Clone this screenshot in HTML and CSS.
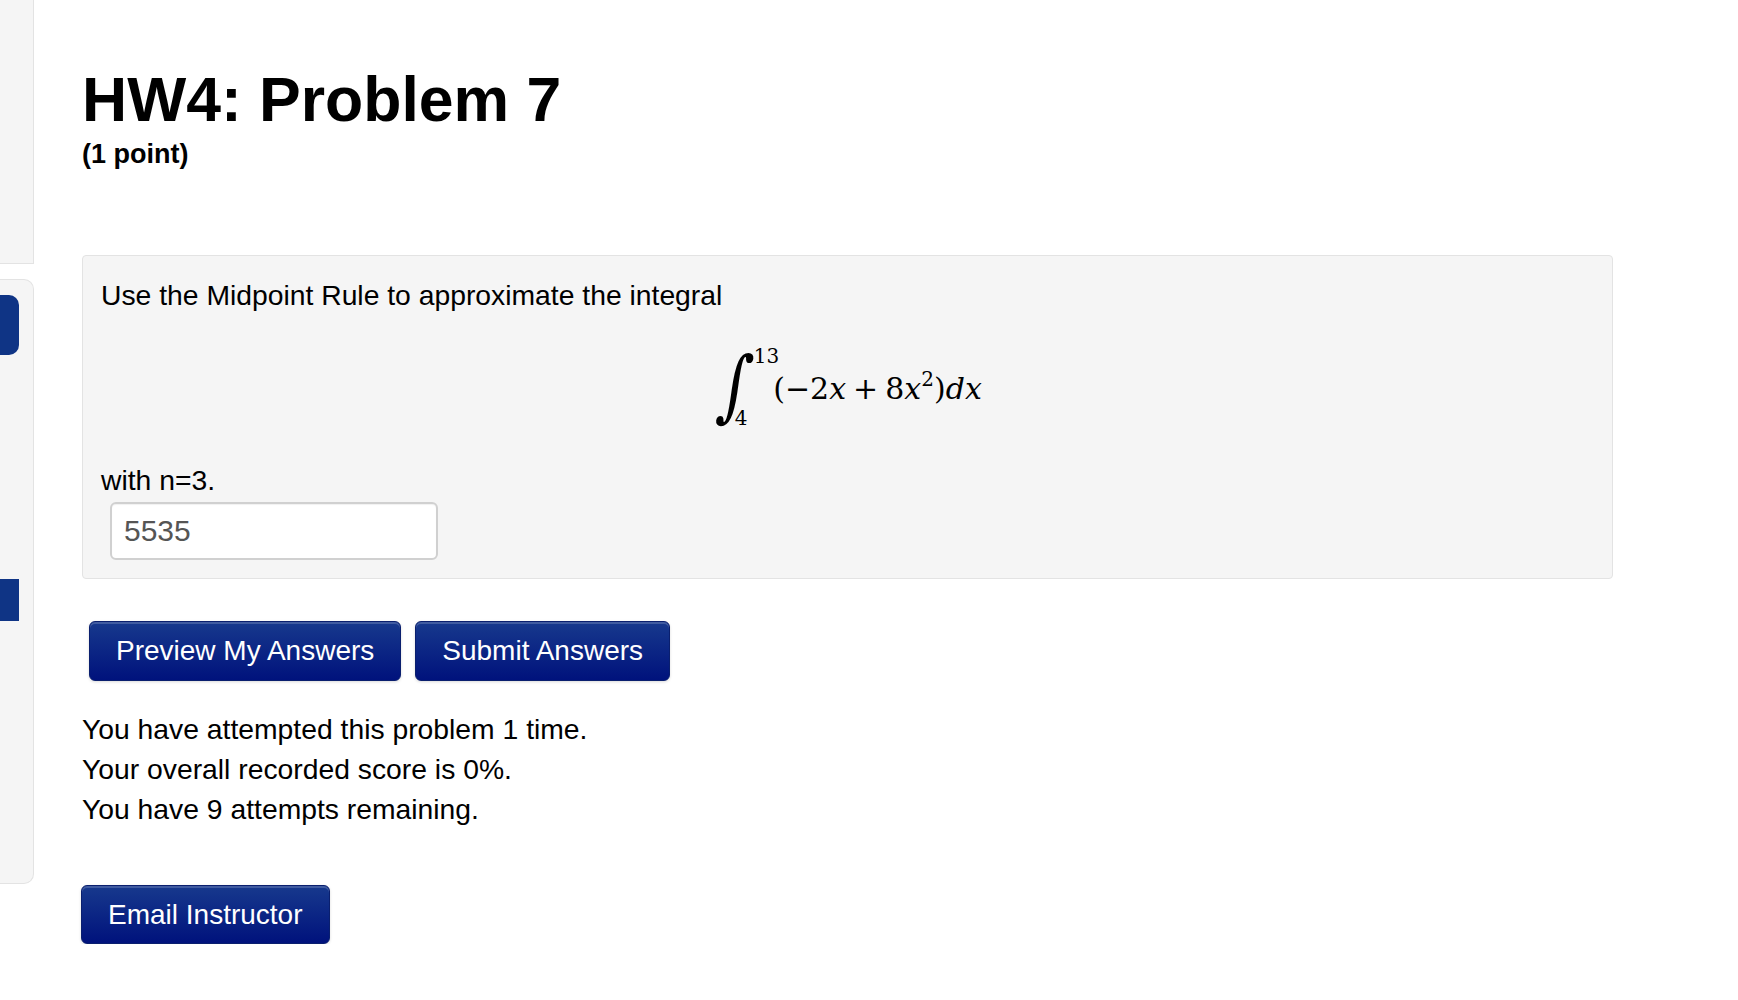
FILE: index.html
```html
<!DOCTYPE html>
<html lang="en">
<head>
<meta charset="utf-8">
<title>HW4: Problem 7</title>
<link rel="stylesheet" href="styles.css">
</head>
<body>
<div class="page">
  <aside class="sidebar">
    <div class="side-top"></div>
    <div class="side-panel">
      <div class="tab"></div>
      <div class="tab2"></div>
    </div>
  </aside>
  <main class="main">
    <h1 class="title">HW4: Problem 7</h1>
    <div class="points">(1 point)</div>
    <div class="problem">
      <p class="line">Use the Midpoint Rule to approximate the integral</p>
      <div class="math">
        <span class="int">∫</span>
        <span class="limits"><span class="up">13</span><span class="lo">4</span></span>
        <span class="expr">(−2<i>x</i><span class="op">+</span>8<i>x</i><sup class="sup">2</sup>)<i>dx</i></span>
      </div>
      <p class="line">with n=3.</p>
      <input class="answer" type="text" value="5535">
    </div>
    <div class="actions">
      <div class="btn">Preview My Answers</div>
      <div class="btn">Submit Answers</div>
    </div>
    <div class="status">
      <div>You have attempted this problem 1 time.</div>
      <div>Your overall recorded score is 0%.</div>
      <div>You have 9 attempts remaining.</div>
    </div>
    <div class="btn email">Email Instructor</div>
  </main>
</div>
</body>
</html>
```

FILE: styles.css
```css
* { box-sizing: border-box; }
body {
  margin: 0;
  background: #fff;
  color: #000;
  font-family: "Liberation Sans", Arial, Helvetica, sans-serif;
}
.page {
  display: flex;
  align-items: flex-start;
}
.sidebar {
  width: 34px;
  flex: none;
  display: flex;
  flex-direction: column;
  gap: 15px;
}
.side-top {
  height: 264px;
  background: #f5f5f5;
  border-right: 1px solid #e3e3e3;
  border-bottom: 1px solid #e3e3e3;
}
.side-panel {
  height: 605px;
  background: #f5f5f5;
  border: 1px solid #e3e3e3;
  border-left: none;
  border-radius: 0 10px 10px 0;
  padding-top: 15px;
  display: flex;
  flex-direction: column;
}
.tab {
  width: 19px;
  height: 60px;
  background: #0f3485;
  border-radius: 0 10px 10px 0;
}
.tab2 {
  margin-top: 224px;
  width: 19px;
  height: 42px;
  background: #0f3485;
}
.main {
  flex: none;
  padding: 64px 0 0 48px;
}
.title {
  margin: 0;
  font-size: 62.5px;
  line-height: 70px;
  font-weight: bold;
}
.points {
  margin-top: 5px;
  font-size: 27px;
  line-height: 30px;
  font-weight: bold;
}
.problem {
  margin-top: 86px;
  width: 1531px;
  background: #f5f5f5;
  border: 1px solid #e3e3e3;
  border-radius: 4px;
  padding: 21px 18px 18px 18px;
  font-size: 28.3px;
  line-height: 36px;
}
.line {
  margin: 0;
}
.math {
  height: 149px;
  display: flex;
  justify-content: center;
  align-items: center;
  font-family: "DejaVu Serif", "Liberation Serif", serif;
  color: #000;
}
.int {
  font-size: 78px;
  line-height: 90px;
  transform: skewX(-7deg) scaleX(0.8);
  margin-left: 2px;
  margin-top: -6px;
}
.limits {
  display: flex;
  flex-direction: column;
  justify-content: space-between;
  height: 82px;
  font-size: 20px;
  line-height: 20px;
  margin-left: -6px;
  margin-top: -2px;
}
.up {
  margin-left: 4px;
}
.lo {
  margin-left: -15px;
}
.expr {
  margin-left: -6px;
  font-size: 30px;
  line-height: 36px;
  margin-top: 2px;
  white-space: nowrap;
}
.expr i {
  font-style: italic;
}
.op {
  margin: 0 7px;
}
.sup {
  font-size: 20px;
  vertical-align: 13px;
  line-height: 0;
}
.answer {
  display: block;
  margin: 4px 0 0 9px;
  width: 328px;
  height: 58px;
  background: #fff;
  border: 2px solid #d0d0d0;
  border-radius: 6px;
  box-shadow: inset 0 1px 1px rgba(0, 0, 0, 0.06);
  padding: 0 12px;
  font-family: "Liberation Sans", Arial, sans-serif;
  font-size: 30px;
  color: #555;
  outline: none;
}
.actions {
  display: flex;
  gap: 14px;
  margin: 42px 0 0 7px;
}
.btn {
  height: 60px;
  padding: 0 26px;
  display: flex;
  align-items: center;
  font-size: 28px;
  color: #fff;
  background: linear-gradient(#17398d, #00127c);
  border: 1px solid #0a1f6e;
  border-radius: 6px;
  box-shadow: inset 0 2px 0 rgba(255, 255, 255, 0.18), 0 1px 3px rgba(0, 0, 0, 0.15);
  white-space: nowrap;
}
.status {
  margin-top: 28px;
  font-size: 28.3px;
  line-height: 40px;
}
.email {
  display: inline-flex;
  margin-top: 56px;
  margin-left: -1px;
  height: 59px;
}
```
